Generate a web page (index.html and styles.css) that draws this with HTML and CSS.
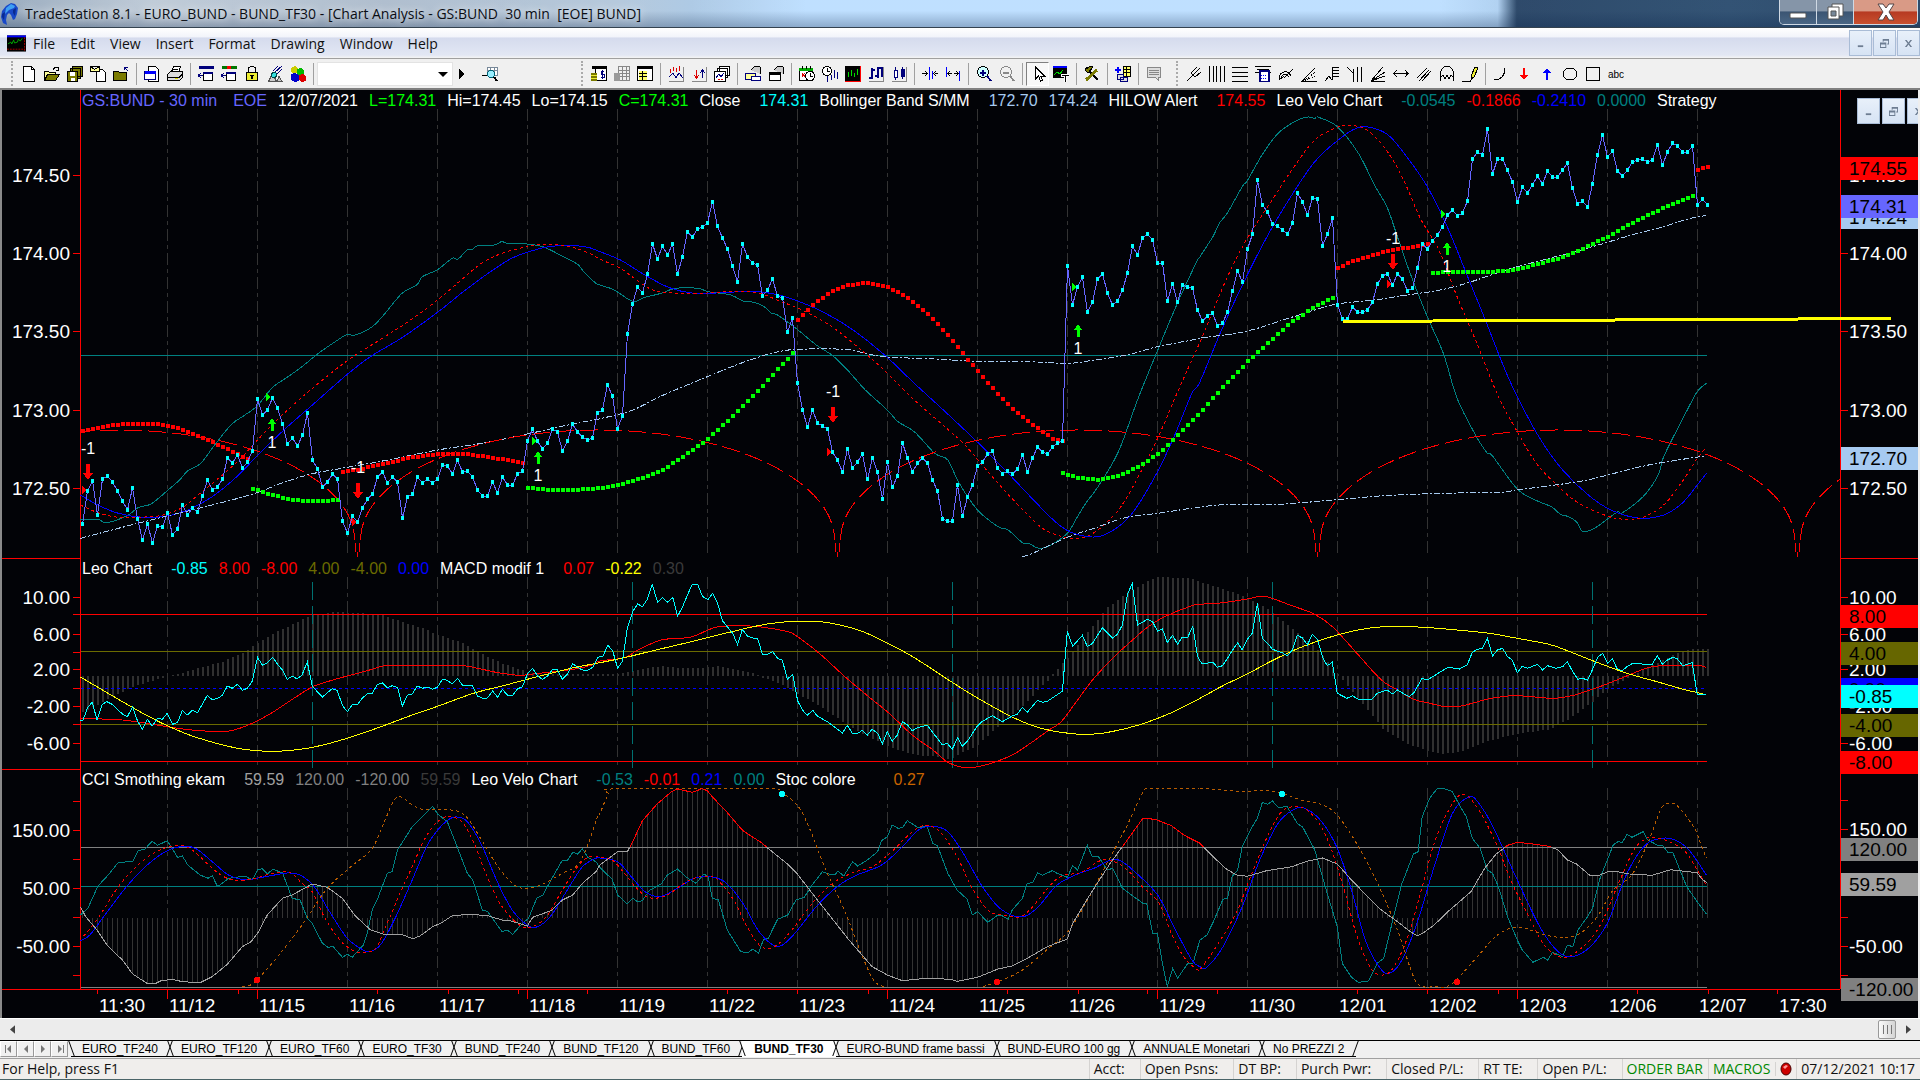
FILE: index.html
```html
<!DOCTYPE html>
<html lang="en">
<head>
  <meta charset="UTF-8" />
  <meta name="viewport" content="width=device-width, initial-scale=1.0"/>
  <title>TradeStation 8.1 - EURO_BUND</title>
  <link rel="stylesheet" href="styles.css">
</head>
<body>
  <header class="titlebar">
    <svg class="logo" viewBox="0 0 18 24"><path d="M2 9 6 4l5-3 4 1 3 4-1 6-2 5-2 1-2-5-2-2-2 2-1 5 1 5-4-2-2-6z" fill="#1848c8"/><path d="M6 6l5-4 4 2-1 2-5 2-4 4z" fill="#3ea0f4"/><path d="M2 12l3-2-1 8-2-3zM13 8l3-2-1 8-2-3z" fill="#0a2a90"/></svg>
    <h1>TradeStation 8.1 - EURO_BUND - BUND_TF30 - [Chart Analysis - GS:BUND&nbsp; 30 min&nbsp; [EOE] BUND]</h1>
    <div class="window-buttons">
      <button aria-label="Minimize"><svg viewBox="0 0 18 18"><rect x="1" y="10" width="16" height="5" rx="1" fill="#fff" stroke="#555"/></svg></button>
      <button aria-label="Restore"><svg viewBox="0 0 18 18"><path d="M6 1h11v12H6z" fill="#fff" stroke="#555"/><path d="M2 4h11v12H2z" fill="#fff" stroke="#555"/><path d="M5 8h5v5H5z" fill="#789" stroke="#555"/></svg></button>
      <button class="close" aria-label="Close"><svg viewBox="0 0 18 18"><path d="M1 1h5l3 4 3-4h5l-5 8 5 8h-5l-3-5-3 5H1l5-8z" fill="#fff" stroke="#544"/></svg></button>
    </div>
  </header>

  <nav class="menubar">
    <svg class="doc-icon" viewBox="0 0 20 17"><path d="M0 0h20v17H0z" fill="#000"/><path d="M0 0h20v2H0z" fill="#00f"/><path d="M1 9l3-2 1 2 2-4 1 3 3-1 1-3 2 2 2-3" fill="none" stroke="#0a0"/><path d="M0 14.500h19M18.500 2v14" stroke="#a00" stroke-dasharray="2 1"/></svg>
    <a href="#">File</a>
    <a href="#">Edit</a>
    <a href="#">View</a>
    <a href="#">Insert</a>
    <a href="#">Format</a>
    <a href="#">Drawing</a>
    <a href="#">Window</a>
    <a href="#">Help</a>
    <div class="mdi-buttons">
      <button aria-label="Minimize chart"><svg viewBox="0 0 10 10"><path d="M2 7h6v2H2z"/></svg></button>
      <button aria-label="Restore chart"><svg viewBox="0 0 10 10"><path d="M3 0h7v6H8V5h1V2H4v1H3zM0 4h7v6H0zm1 2v3h5V6z"/></svg></button>
      <button aria-label="Close chart"><svg viewBox="0 0 10 10"><path d="M1 1h2l2 3 2-3h2L6 5l3 4H7L5 6 3 9H1l3-4z"/></svg></button>
    </div>
  </nav>

  <div class="toolbar">
    <div class="tools" id="toolsMain"></div>
    <div class="tools" id="toolsChart"></div>
    <div class="tools" id="toolsDraw"></div>
  </div>

  <main class="chart">
    <section class="pane pane-price">
      <div class="axis axis-left" id="axisL1"></div>
      <div class="plot">
        <svg id="plot1" viewBox="81 90 1759 468" preserveAspectRatio="none"></svg>
        <div class="legend">
          <span class="violet">GS:BUND - 30 min</span><span class="violet session">EOE</span><span>12/07/2021</span><span class="lime">L=174.31</span><span>Hi=174.45</span><span>Lo=174.15</span><span class="lime">C=174.31</span>
          <span>Close</span><span class="cyan value">174.31</span>
          <span>Bollinger Band S/MM</span><span class="sky value">172.70</span><span class="sky">174.24</span>
          <span>HILOW Alert</span><span class="red value">174.55</span>
          <span>Leo Velo Chart</span><span class="teal value">-0.0545</span><span class="red">-0.1866</span><span class="blue">-0.2410</span><span class="teal">0.0000</span>
          <span>Strategy</span>
        </div>
      </div>
      <div class="axis axis-right" id="axisR1"></div>
      <div class="mdi-buttons floating">
        <button aria-label="Minimize window"><svg viewBox="0 0 10 10"><path d="M2 7h6v2H2z"/></svg></button>
        <button aria-label="Restore window"><svg viewBox="0 0 10 10"><path d="M3 0h7v6H8V5h1V2H4v1H3zM0 4h7v6H0zm1 2v3h5V6z"/></svg></button>
        <button aria-label="Close window"><svg viewBox="0 0 10 10"><path d="M1 1h2l2 3 2-3h2L6 5l3 4H7L5 6 3 9H1l3-4z"/></svg></button>
      </div>
    </section>

    <section class="pane pane-leo">
      <div class="axis axis-left" id="axisL2"></div>
      <div class="plot">
        <svg id="plot2" viewBox="81 558 1759 211" preserveAspectRatio="none"></svg>
        <div class="legend">
          <span>Leo Chart</span><span class="cyan value">-0.85</span><span class="red">8.00</span><span class="red">-8.00</span><span class="olive">4.00</span><span class="olive">-4.00</span><span class="blue">0.00</span>
          <span>MACD modif 1</span><span class="red value">0.07</span><span class="yellow">-0.22</span><span class="dim">0.30</span>
        </div>
      </div>
      <div class="axis axis-right" id="axisR2"></div>
    </section>

    <section class="pane pane-cci">
      <div class="axis axis-left" id="axisL3"></div>
      <div class="plot">
        <svg id="plot3" viewBox="81 769 1759 220" preserveAspectRatio="none"></svg>
        <div class="legend">
          <span>CCI Smothing ekam</span><span class="silver value">59.59</span><span class="gray">120.00</span><span class="gray">-120.00</span><span class="dim">59.59</span>
          <span>Leo Velo Chart</span><span class="teal value">-0.53</span><span class="red">-0.01</span><span class="blue">0.21</span><span class="teal">0.00</span>
          <span>Stoc colore</span><span class="orange value wide">0.27</span>
        </div>
      </div>
      <div class="axis axis-right" id="axisR3"></div>
    </section>

    <div class="time-axis" id="timeAxis"></div>
  </main>

  <div class="scrollbar">
    <button aria-label="Scroll left"><svg viewBox="0 0 6 10"><path d="M6 0v10L0 5z"/></svg></button>
    <div class="track"><div class="thumb"></div></div>
    <button aria-label="Scroll right"><svg viewBox="0 0 6 10"><path d="M0 0v10l6-5z"/></svg></button>
  </div>

  <nav class="tabs">
    <div class="tab-nav">
      <button aria-label="First"><svg viewBox="0 0 8 8"><path d="M0 0h1v8H0zM6 0v8L2 4z"/></svg></button>
      <button aria-label="Previous"><svg viewBox="0 0 8 8"><path d="M6 0v8L2 4z"/></svg></button>
      <button aria-label="Next"><svg viewBox="0 0 8 8"><path d="M2 0v8l4-4z"/></svg></button>
      <button aria-label="Last"><svg viewBox="0 0 8 8"><path d="M2 0v8l4-4zM7 0h1v8H7z"/></svg></button>
    </div>
    <a href="#">EURO_TF240</a>
    <a href="#">EURO_TF120</a>
    <a href="#">EURO_TF60</a>
    <a href="#">EURO_TF30</a>
    <a href="#">BUND_TF240</a>
    <a href="#">BUND_TF120</a>
    <a href="#">BUND_TF60</a>
    <a href="#" class="active">BUND_TF30</a>
    <a href="#">EURO-BUND frame bassi</a>
    <a href="#">BUND-EURO 100 gg</a>
    <a href="#">ANNUALE Monetari</a>
    <a href="#">No PREZZI 2</a>
  </nav>

  <footer class="status">
    <span class="help">For Help, press F1</span>
    <span>Acct:</span>
    <span>Open Psns:</span>
    <span>DT BP:</span>
    <span>Purch Pwr:</span>
    <span>Closed P/L:</span>
    <span>RT TE:</span>
    <span>Open P/L:</span>
    <span class="on">ORDER BAR</span>
    <span class="on">MACROS</span>
    <span class="led"><svg viewBox="0 0 12 14"><ellipse cx="6" cy="7" rx="5" ry="6" fill="#c00" stroke="#400"/><path d="M3 5l3-2 2 1-3 3z" fill="#f99"/></svg></span>
    <span>07/12/2021 10:17</span>
  </footer>

  <script src="script.js"></script>
</body>
</html>
```
FILE: styles.css
```css
:root {
  --ui: "Open Sans", "Noto Sans", sans-serif;
  --sans: "Liberation Sans", Arial, sans-serif;
  --axis: #f00;
  --black: #020307;
}

* {
  box-sizing: border-box;
}

body {
  margin: 0;
  height: 100vh;
  display: flex;
  flex-direction: column;
  overflow: hidden;
  background: #f0eeed;
  font-family: var(--sans);
}

button {
  margin: 0;
  padding: 0;
  border: none;
  background: none;
}

a {
  color: inherit;
  text-decoration: none;
}

svg {
  display: block;
}

/* title bar */
.titlebar {
  height: 28px;
  display: flex;
  align-items: center;
  padding-right: 2px;
  border-bottom: 1px solid #34424f;
  background:
    linear-gradient(to bottom, rgba(255, 255, 255, 0.1) 40%, rgba(60, 80, 110, 0.35)),
    linear-gradient(to right, #8fa3b8, #b9c6d4 8%, #a7b7c9 20%, #aec3d8 32%, #a5c4e2 36%, #b8dcff 42%, #b8dcff 75%, #a9cdf0 78%, #17365a 79%, #1c4065 90%, #17375a);
}

.logo {
  width: 18px;
  height: 24px;
}

.titlebar h1 {
  flex: 1;
  margin: 0 0 0 7px;
  font: 14px/28px var(--ui);
  color: #0a0d14;
  white-space: nowrap;
  text-shadow: 0 0 8px #fff;
}

.window-buttons {
  display: flex;
  align-self: flex-start;
  height: 25px;
  border: 1px solid #cfd9e4;
  border-top: none;
  border-radius: 0 0 5px 5px;
  overflow: hidden;
}

.window-buttons button {
  width: 37px;
  display: flex;
  align-items: center;
  justify-content: center;
  border-right: 1px solid #cfd9e4;
  background: linear-gradient(#8595a8 45%, #3b5573 50%, #4a6685);
}

.window-buttons .close {
  width: 63px;
  border-right: none;
  background: linear-gradient(#d99a86 45%, #b73a22 50%, #c9502f);
}

.window-buttons svg {
  width: 18px;
  height: 18px;
}

/* menu */
.menubar {
  height: 31px;
  display: flex;
  align-items: center;
  gap: 15px;
  padding-left: 7px;
  background: linear-gradient(#fff, #f2f4fa 30%, #d5dbed 33%, #e2e7f4 90%, #f4f4f4);
  border-bottom: 1px solid #a0a0a0;
  font: 14px/31px var(--ui);
  color: #111;
}

.doc-icon {
  width: 19px;
  height: 17px;
  margin-right: -8px;
}

.mdi-buttons {
  display: flex;
  gap: 1px;
}

.menubar .mdi-buttons {
  margin-left: auto;
}

.mdi-buttons button {
  width: 23px;
  height: 26px;
  display: flex;
  align-items: center;
  justify-content: center;
  border: 1px solid #a9bcd6;
  background: linear-gradient(#e8f0fa, #d6e3f4);
}

.mdi-buttons svg {
  width: 9px;
  height: 9px;
  fill: #6d7d92;
}

.floating {
  position: absolute;
  top: 8px;
  left: calc(100% - 61px);
  gap: 2px;
}

/* toolbar */
.toolbar {
  height: 31px;
  display: grid;
  grid-template-columns: 30% 31% 1fr;
  background: #f0f0f0;
  border-bottom: 2px solid #808080;
}

.tools {
  display: flex;
  align-items: center;
}

.tools::before {
  content: "";
  height: 25px;
  margin: 0 4px 0 5px;
  border-left: 2px dotted #aaa;
}

.tools:first-child::before {
  margin-left: 11px;
}

.tools button {
  width: 23px;
  height: 24px;
  display: flex;
  align-items: center;
  justify-content: center;
  flex: none;
}

.tools button.pressed {
  border: 1px solid #fff;
  border-color: #808080 #fff #fff #808080;
  background: #f8f8f8;
}

.tools svg {
  width: 16px;
  height: 16px;
  shape-rendering: crispEdges;
}

.tools .sep {
  height: 22px;
  margin: 0 3px 0 4px;
  border-left: 1px solid #a0a0a0;
}

.tools select {
  width: 136px;
  height: 24px;
  border: 1px solid #e3e3e3;
  background: #fff;
  appearance: none;
}

.combo {
  position: relative;
}

.combo::after {
  content: "";
  position: absolute;
  right: 5px;
  top: 10px;
  border: 5px solid transparent;
  border-top-color: #000;
  border-bottom: none;
}

.tools .go {
  width: 16px;
  margin-right: 9px;
}

/* chart */
.chart {
  flex: 1;
  min-height: 0;
  display: grid;
  grid-template-rows: 468fr 211fr 220fr 29px;
  background: var(--black);
  border-left: 2px solid #8a8a8a;
  border-right: 2px solid #eee;
  overflow: hidden;
}

.pane {
  position: relative;
  display: grid;
  grid-template-columns: 79px 1fr 78px;
  min-height: 0;
}

.plot {
  position: relative;
  z-index: 1;
  min-height: 0;
}

.plot svg {
  width: 100%;
  height: 100%;
  overflow: visible;
  shape-rendering: crispEdges;
}

.plot text {
  fill: #fff;
  font: 16px var(--sans);
  text-anchor: middle;
}

.axis {
  position: relative;
  color: #fff;
  font-size: 19px;
  line-height: 23px;
}

.axis-left {
  border-right: 1px solid var(--axis);
}

.axis-right {
  border-left: 1px solid var(--axis);
}

.pane-leo .axis,
.pane-cci .axis-left {
  border-top: 1px solid var(--axis);
}

.mark {
  position: absolute;
  left: 0;
  right: 0;
  height: 23px;
  margin-top: -11px;
}

.axis-left .mark {
  padding-right: 10px;
  text-align: right;
}

.axis-right .mark {
  padding-left: 8px;
}

.mark::after {
  content: "";
  position: absolute;
  top: 11px;
  width: 7px;
  border-top: 1px solid var(--axis);
}

.axis-left .mark::after {
  right: 0;
}

.axis-right .mark::after {
  left: 0;
}

.mark.tag {
  color: #000;
}

.mark.tag::after {
  display: none;
}

.legend {
  position: absolute;
  top: 1px;
  left: 1px;
  display: flex;
  gap: 11px;
  font-size: 16px;
  line-height: 20px;
  color: #fff;
  white-space: nowrap;
}

.legend .value {
  margin-left: 8px;
}

.legend .session {
  margin-left: 5px;
}

.legend .wide {
  margin-left: 27px;
}

.violet { color: #66f; }
.lime { color: #0f0; }
.cyan { color: #0ff; }
.sky { color: #a6caf0; }
.red { color: #f00; }
.teal { color: #008080; }
.blue { color: #00f; }
.olive { color: #6b6b00; }
.yellow { color: #ff0; }
.dim { color: #3a3a3a; }
.silver { color: #a0a0a0; }
.gray { color: #808080; }
.orange { color: #c86400; }

.bg-red { background: #f00; }
.bg-violet { background: #66f; }
.bg-sky { background: #a6caf0; }
.bg-olive { background: #666600; }
.bg-blue { background: #00f; }
.bg-cyan { background: #0ff; }
.bg-gray { background: #808080; }
.bg-silver { background: #a0a0a0; }

.time-axis {
  position: relative;
  color: #fff;
  font-size: 19px;
  line-height: 24px;
}

.time-axis::before {
  content: "";
  position: absolute;
  left: 0;
  right: 78px;
  border-top: 1px solid var(--axis);
}

.time-axis span {
  position: absolute;
  top: 5px;
}

.time-axis i {
  position: absolute;
  top: 0;
  height: 5px;
  border-left: 1px solid var(--axis);
}

.time-axis .long {
  height: 10px;
}

/* scrollbar */
.scrollbar {
  height: 22px;
  display: flex;
  align-items: center;
  background: #ececec;
  border-top: 1px solid #fff;
}

.scrollbar button {
  width: 24px;
  display: flex;
  justify-content: center;
}

.scrollbar svg {
  width: 5px;
  height: 9px;
  fill: #444;
}

.track {
  flex: 1;
  display: flex;
  justify-content: flex-end;
}

.thumb {
  width: 18px;
  height: 19px;
  border: 1px solid #999;
  border-radius: 2px;
  background:
    repeating-linear-gradient(to right, #777 0 1px, transparent 1px 4px) center / 9px 9px no-repeat,
    linear-gradient(to right, #fafafa, #d5d5d5);
}

/* workspace tabs */
.tabs {
  height: 19px;
  display: flex;
  border-top: 1px solid #000;
  background: #f0f0f0;
  border-bottom: 1px solid #a0a0a0;
  font-size: 12px;
  line-height: 17px;
  color: #000;
}

.tab-nav {
  display: flex;
  margin-right: 3px;
}

.tab-nav button {
  width: 17px;
  height: 16px;
  display: flex;
  align-items: center;
  justify-content: center;
  border: 1px solid #fff;
  border-color: #fff #999 #999 #fff;
}

.tab-nav svg {
  width: 8px;
  height: 8px;
  fill: #777;
}

.tabs a {
  position: relative;
  height: 16px;
  padding: 0 12px 0 11px;
  border-bottom: 1px solid #000;
}

.tabs a::after {
  content: "";
  position: absolute;
  right: 0;
  top: 0;
  height: 15px;
  border-right: 1px solid #000;
  transform: skewX(-20deg);
}

.tabs a::before {
  content: "";
  position: absolute;
  left: 0;
  top: 0;
  height: 15px;
  border-right: 1px solid #000;
  transform: skewX(20deg);
}

.tabs .active {
  padding: 0 12px;
  background: #fff;
  border-bottom-color: #fff;
  font-weight: bold;
}

/* status bar */
.status {
  height: 21px;
  display: flex;
  align-items: center;
  border-bottom: 1px solid #4a6468;
  background: #f0eeec;
  font: 14px/20px var(--ui);
  color: #111;
  white-space: nowrap;
}

.status span {
  padding: 0 15px 0 4px;
  border-left: 1px solid #d5d3d1;
}

.status .help {
  flex: 1;
  padding-left: 2px;
  border: none;
}

.status .on {
  padding-right: 5px;
  color: #080;
}

.status .led {
  padding: 0 4px;
}

.status span:last-child {
  padding-right: 5px;
}

.led svg {
  width: 12px;
  height: 14px;
}
```
FILE: script.js
```js
// ---------- toolbar ----------
const K = 'fill="none" stroke="#000"';
const N = 'fill="none" stroke="#00007b"';
const G = 'fill="none" stroke="#888"';

const icons = {
  blank: `<path d="M2.500 .5h8l3 3v12h-11z" fill="#fff" stroke="#000"/><path d="M10.500 .5v3h3" ${K}/>`,
  open: `<path d="M.5 14V5.500h4l1 1h6v2" fill="#ff9" stroke="#000"/><path d="M.5 14.500l3-6h12l-4 6z" fill="#7b7b00" stroke="#000"/><path d="M9 3.500l2-2h3v3m-2 0h3" ${K}/>`,
  saveAll: `<path d="M5.500 .5h10v10h-10zM3.500 2.500h10v10h-10z" fill="#7b7b00" stroke="#000"/><path d="M.5 5.500h10v10h-10z" fill="#7b7b00" stroke="#000"/><path d="M3 6h5v4H3zM4 12h4v3H4z" fill="#fff"/>`,
  mailDoc: `<path d="M6.500 3.500h6l3 3v9h-9z" fill="#fff" stroke="#000"/><path d="M.5 .5h9v5h-9zl4 3 5-3" fill="#ff9" stroke="#000"/>`,
  folderUp: `<path d="M.5 14.500v-9h5l1 1h7v8z" fill="#7b7b00" stroke="#000"/><path d="M15 5l-3-3M11.500 4V1.500H15" ${N}/>`,
  winDoc: `<path d="M4.500 .5h7l3 3v12h-10z" fill="#fff" stroke="#000"/><path d="M.5 5.500h11v8H.5z" fill="#fff" stroke="#00007b"/><path d="M1 5h11v3H1z" fill="#00f"/>`,
  print: `<path d="M4.500 6l2-5.500h7l-2 6" fill="#fff" stroke="#000"/><path d="M.5 8.500l3-3h12v6l-3 3H.5z" fill="#ddd" stroke="#000"/><path d="M1 11.500h11l3-3M6 3.500h5" ${K}/><path d="M8 12h3v1H8z" fill="#dd0"/>`,
  winBack: `<path d="M1 0h15v3H1z" fill="#00007b"/><path d="M5.500 6.500h9v8h-9z" fill="#fff" stroke="#000"/><path d="M5 6h10v2H5z" fill="#00007b"/><path d="M0 9.500h5M3 7l-3 2.500L3 12" ${N}/>`,
  winNext: `<path d="M1 0h15v3H1z" fill="#070"/><path d="M6 0h4v3H6z" fill="#f00"/><path d="M5.500 6.500h9v8h-9z" fill="#fff" stroke="#000"/><path d="M5 6h10v2H5z" fill="#00007b"/><path d="M0 9.500h5M3 7l-3 2.500L3 12" ${N}/>`,
  lock: `<path d="M4.500 7V2l2-1.500h3l2 1.500v5" ${K}/><path d="M2.500 6.500h11v8h-11z" fill="#ee3" stroke="#000"/><path d="M6 9h4v1H9v3H7v-3H6z"/>`,
  satellite: `<path d="M15 0L7 7m8-4L9 9m2-9L6 5" ${N}/><path d="M1.500 15.500l4-8 4 8zM10 15.500h5l-3-5z" fill="#ccc" stroke="#555"/><circle cx="7" cy="9" r="2.500" fill="#3dd" stroke="#044"/>`,
  cubes: `<path d="M1 2l4-2 3 2v5l-4 1-3-2z" fill="#cc0"/><path d="M7 3l4-1 3 2v5l-4 1-3-2z" fill="#0b0"/><path d="M1 8l4-1 4 2v6l-4 1-4-2z" fill="#00c"/><path d="M9 9l4-1 3 2v5l-4 1-3-2z" fill="#d00"/>`,
  go: `<path d="M6 3v10l5-5z"/>`,
  lookup: `<path d="M5 1.500h10v8H5zM5 4.500h10M8.500 1v8M12 1v8" fill="#fff" stroke="#789"/><path d="M0 9.500h7" ${K}/><circle cx="9" cy="8" r="3.500" fill="#9ef" stroke="#067"/><path d="M12 11l3 4" stroke="#000" stroke-width="2"/>`,
  moneyTable: `<path d="M4.500 .5h11v14h-11z" fill="#fff" stroke="#000"/><path d="M1 0h14v3H1z"/><path d="M0 7h6v8H0z" fill="#7b7b00"/><path d="M0 9.500h6M0 12.500h6" stroke="#ee3"/><path d="M13 5.500h-3v3h3v3h-3M11.500 4v9" ${N}/>`,
  tableOff: `<path d="M4.500 .5h11v14h-11zM5 4.500h10M5 7.500h10M5 10.500h10M8.500 1v13M12.500 1v13" ${G}/><path d="M0 7h6v8H0z" fill="#999"/>`,
  table: `<path d="M.5 .5h15v14H.5z" fill="#fff" stroke="#000"/><path d="M0 0h16v3H0z"/><path d="M2 5h8v9H2z" fill="#ff6"/><path d="M2 7.500h8M2 10.500h8M5.500 5v9" ${K}/>`,
  wave: `<path d="M.5 15.500h15V1" ${G}/><path d="M1 11l4-4 3 5 3-5 4 5" fill="none" stroke="#00007b"/><path d="M2.500 3v4M5.500 1v4M8.500 2v4M11.500 0v5" stroke="#d00"/>`,
  upDown: `<path d="M.5 15.500h15V1" ${G}/><path d="M5.500 4v8M3 9l2.500 3L8 9" fill="none" stroke="#d00"/><path d="M11.500 12V4M9 7l2.500-3L14 7" ${N}/>`,
  windows: `<path d="M5.500 .5h10v9h-10zM3.500 2.500h10v9h-10z" fill="#fff" stroke="#000"/><path d="M.5 5.500h11v10H.5z" fill="#fff" stroke="#000"/><path d="M2 12l3-4 2 3 3-4" ${N}/><path d="M4 13h2M7 13h2" stroke="#d00"/>`,
  sheet: `<path d="M6 4l4-4 5 1v7" fill="#ccc" stroke="#000"/><path d="M.5 7.500h10v6H.5z" fill="#ff9" stroke="#00007b"/><path d="M6 10.500h9v4H6z" fill="#fff" stroke="#00007b"/>`,
  sheetDark: `<path d="M6 4l4-4 5 1v7" fill="#ccc" stroke="#000"/><path d="M1.500 6.500h11v8h-11z" fill="#fff" stroke="#000"/><path d="M1 6h12v3H1z"/>`,
  calClock: `<path d="M.5 2.500h13v12H.5z" fill="#fff" stroke="#000"/><path d="M0 2h14v3H0z" fill="#0a0"/><path d="M3.500 0v3M7.500 0v3M11.500 0v3" ${K}/><path d="M3 7l3 4m0-4l-3 4" stroke="#d00"/><circle cx="11" cy="10" r="4.500" fill="#fff" stroke="#000"/><path d="M11 7v3h3" ${K}/>`,
  clockBars: `<circle cx="5" cy="5" r="4.500" fill="#fff" stroke="#000"/><path d="M5 2v3h3" ${K}/><path d="M5.500 10v6M9.500 9v5M12.500 4v8M15.500 6v7" ${N}/>`,
  barChart: `<path d="M0 0h16v16H0z"/><path d="M3.500 6v5M6.500 4v6M9.500 7v4M12.500 3v6" stroke="#0d0"/><path d="M15.500 0v16M0 15.500h16" stroke="#f00"/>`,
  bars: `<path d="M.5 15.500h15V1" ${G}/><path d="M4 2v11M4 12H1M4 4h3M10 1v11M10 10H7M10 2h4v9" fill="none" stroke="#00007b" stroke-width="2"/>`,
  candles: `<path d="M.5 15.500h15V1" ${G}/><path d="M4.500 1v13M11.500 1v12" ${N}/><path d="M3 4h3v7H3z" fill="#fff" stroke="#00007b"/><path d="M10 3h4v8h-4z" fill="#00007b"/>`,
  squeeze: `<path d="M7.500 1v13M10.500 5v8" stroke="#00f"/><path d="M0 7.500h5M3 5l2.500 2.500L3 10M16 7.500h-3M14 5l-2.500 2.500L14 10" ${K}/>`,
  expand: `<path d="M1.500 1v10M14.500 5v10" stroke="#00f"/><path d="M3 7.500h4M5 5L3 7.500 5 10M13 7.500H9M11 5l2 2.500L11 10" ${K}/>`,
  zoomIn: `<circle cx="7" cy="6" r="5.500" fill="#cff" stroke="#000"/><path d="M4 6.500h6M7 3.500v6" stroke="#00007b" stroke-width="2"/><path d="M11 10l4 5" stroke="#00007b" stroke-width="2"/>`,
  zoomOut: `<circle cx="7" cy="6" r="5.500" ${G}/><path d="M4 6.500h6" stroke="#888" stroke-width="2"/><path d="M11 10l4 5" stroke="#888" stroke-width="2"/>`,
  pointer: `<path d="M5.500 1v12l3-3 2 5 2-1-2-4h4z" fill="#fff" stroke="#000"/>`,
  textChart: `<path d="M0 1h14v11H0z"/><path d="M0 0h14v2H0z" fill="#00f"/><path d="M1 9l3-3 3 2 3-4" fill="none" stroke="#0d0"/><path d="M8 8h8v2h-3v6h-2v-6H8z" stroke="#fff"/>`,
  tools: `<path d="M2 2l12 12" stroke="#000" stroke-width="2"/><path d="M13 4L2 14" stroke="#7b7b00" stroke-width="3"/><path d="M1 4l5-4 3 1-5 6z" fill="#7b7b00" stroke="#000"/>`,
  addSheet: `<path d="M8.500 .5h7v10h-7z" fill="#ff6" stroke="#000"/><path d="M9 3.500h6M9 6.500h6M11.500 1v9" ${K}/><path d="M0 3.500h6M3 .5v6" stroke="#00f" stroke-width="2"/><path d="M2.500 8.500h6v5h-6zM5.500 11.500h7v4h-7z" fill="#ddd" stroke="#00007b"/>`,
  note: `<path d="M1.500 1.500h13v10h-2v3l-3-3h-8z" fill="#ddd" stroke="#888"/><path d="M3 4.500h10M3 6.500h10M3 8.500h10" ${G}/>`,
  fork: `<path d="M1 15l6-6M5 7l4 4M5 7l6-6M9 11l6-5M7 9l7-7" ${K}/>`,
  vlines: `<path d="M.5 0v16M4.500 0v16M7.500 0v16M11.500 0v16M15.500 0v16" ${K}/>`,
  hlines: `<path d="M0 1.500h16M0 6.500h16M0 10.500h16M0 15.500h16" ${K}/>`,
  calc: `<path d="M0 .5h16M2 3.500h12M0 6.500h16" ${K}/><path d="M4.500 4.500h9v11h-9z" fill="#fff" stroke="#00007b" stroke-width="2"/><path d="M6 9.500h6M6 12.500h6" stroke="#00f" stroke-dasharray="1 1"/>`,
  arcs: `<path d="M1 13c1-9 9-9 12-3M3 13c1-6 6-6 8-2M1 14l5-4M6 12l9-9" ${K}/>`,
  fan: `<path d="M0 15.500h16M1 15L14 2" ${K}/><path d="M2 15L15 6M2 15l13-5" fill="none" stroke="#000" stroke-dasharray="1 1"/>`,
  ladder: `<path d="M1 15l4-5 3 4 1-13M9 1.500h6M9 4.500h6M9 7.500h6M9 10.500h6" ${K}/>`,
  timeLines: `<path d="M0 1l6 6M6.500 3v13M10.500 1v15M14.500 1v15" ${K}/>`,
  fanLines: `<path d="M1 15.500h14M1 15L13 1M1 15l14-9M1 15l14-5" ${K}/>`,
  extend: `<path d="M1 7.500h14M4 4L1 7.500 4 11M12 4l3 3.500-3 3.500" ${K}/>`,
  parallel: `<path d="M1 12L11 2M3 15L13 4M6 15l9-10" ${K}/>`,
  cycle: `<path d="M1.500 15V7c1-9 12-9 13 0v8M1 12l3-3 2 4 2-4 2 4 2-4 3 3" ${K}/>`,
  pencil: `<path d="M0 15.500h8l2-3" ${K}/><path d="M9 10l4-9 3 1-4 9-3 2z" fill="#ee3" stroke="#000"/>`,
  arc: `<path d="M1 14c7 0 11-5 11-12" ${K}/>`,
  down: `<path d="M7 2h2v7h3l-4 5-4-5h3z" fill="#f00"/>`,
  up: `<path d="M7 14h2V7h3L8 2 4 7h3z" fill="#00f"/>`,
  ellipse: `<ellipse cx="8" cy="8" rx="7" ry="6" ${K}/>`,
  rect: `<path d="M1.500 1.500h13v13h-13z" ${K}/>`,
  abc: `<text x="0" y="12" font-size="10" font-family="Liberation Sans">abc</text>`
};

const toolbars = {
  toolsMain: 'blank open saveAll mailDoc folderUp | winDoc print | winBack winNext lock satellite cubes | combo go lookup',
  toolsChart: 'moneyTable tableOff table | wave upDown windows | sheet sheetDark | calClock clockBars barChart bars candles | squeeze expand | zoomIn zoomOut | pointer textChart | tools | addSheet | note',
  toolsDraw: 'fork vlines hlines calc arcs fan ladder timeLines fanLines extend parallel cycle pencil | arc down up ellipse rect abc'
};

for (const id in toolbars) {
  document.getElementById(id).innerHTML = toolbars[id].split(' ').map(name => {
    if (name === '|') return '<span class="sep"></span>';
    if (name === 'combo') return '<span class="combo"><select aria-label="Symbol"></select></span>';
    const cls = name === 'pointer' ? 'pressed' : name === 'go' ? 'go' : '';
    return `<button class="${cls}" aria-label="${name}"><svg viewBox="0 0 16 16">${icons[name]}</svg></button>`;
  }).join('');
}

// ---------- series data ----------
// One close per 30 min bar, counted down from the top of the pane, 3 units per pixel
const close = [
  1242,1143,1113,1215,1107,1098,1116,1143,1173,1199,1134,1227,1290,1242,1299,1247,1251,
  1209,1275,1257,1185,1215,1194,1206,1158,1110,1140,1131,1107,1044,1059,1035,1074,1056,1022,
  867,915,900,864,894,942,1002,984,1008,975,909,1050,1077,1131,1116,1092,1107,1233,
  1269,1218,1236,1194,1167,1152,1101,1086,1119,1101,1116,1224,1161,1152,1101,1119,1107,1119,
  1107,1065,1068,1092,1050,1086,1083,1101,1140,1158,1158,1116,1149,1101,1125,1125,1092,1083,
  993,957,993,1017,999,957,966,1023,993,942,966,981,990,984,909,900,825,858,
  957,917,671,581,531,549,492,402,447,408,435,402,492,441,366,381,357,351,
  339,275,348,384,417,468,516,402,441,459,465,558,540,507,558,564,666,624,
  819,900,951,900,939,948,957,1026,1050,1086,1017,1074,1056,1032,1107,1044,1086,1167,
  1056,1131,1098,999,1044,1086,1059,1044,1059,1110,1143,1227,1233,1233,1125,1218,1161,1125,
  1068,1056,1032,1023,1074,1092,1083,1092,1077,1035,1086,1044,1011,1026,1032,1011,999,993,
  468,585,531,501,606,576,507,492,549,585,573,540,489,408,435,384,372,390,
  459,459,573,522,576,525,531,534,600,633,618,609,648,639,606,543,483,516,
  417,372,210,285,306,342,348,360,372,339,249,276,315,264,267,408,372,324,
  585,627,627,591,606,606,600,576,522,497,492,525,492,507,543,534,474,402,
  417,393,375,351,315,300,318,309,273,147,126,134,57,192,147,147,180,216,
  276,231,249,225,198,222,183,201,201,180,159,234,282,273,291,222,134,75,
  141,123,183,198,180,156,150,147,156,150,104,165,126,99,108,126,126,108,
  285,267,285
];

// Curves are kept in three chunks, split by "|", each with its own origin and x scale
const chunks = [{ x: 0, k: 2.45 }, { x: 600, k: 2.45 }, { x: 1200, k: 2.178 }];

const price = {
  velo: '197,1228 240,1228 260,1238 310,1218 340,1192 370,1182 410,1142 440,1110 460,1082 490,1062 520,1015 545,975 570,940 600,915 630,888 668,832 700,805 740,770 780,730 830,688 851,673 870,675 910,652 940,615 985,550 1022,524 1035,500 1072,479 1108,445 1122,447 1145,420 1158,417 1170,407 1210,405 1230,394 1240,399 1290,402 1330,410 1380,440 1415,463 1430,485 1460,520|0,525 35,540 80,574 110,562 150,550 185,535 240,535 265,545 320,555 350,573 370,575 400,588 420,610 435,615 480,655 530,705 570,737 610,785 650,840 704,900 730,935 770,965 820,1030 852,1050 880,1120 925,1200 975,1250 1000,1260 1035,1298 1050,1300 1075,1315 1100,1308 1145,1270 1165,1230 1190,1180 1220,1130 1270,1025 1320,860 1380,680 1420,565 1460,460|0,440 28,380 42,340 60,308 92,230 103,212 135,135 170,70 210,32 235,21 250,25 258,22 299,50 345,130 380,225 407,290 430,380 455,480 495,620 530,730 560,865 600,975 625,1028 637,1038 691,1137 730,1170 765,1190 785,1213 800,1219 820,1235 834,1265 855,1258 870,1245 908,1207 920,1208 965,1160 998,1095 1010,1040 1050,930 1083,845 1103,820',
  fast: '197,1185 240,1208 290,1222 340,1222 400,1215 450,1190 490,1150 540,1100 590,1045 650,965 700,905 770,830 851,752 930,690 1000,635 1072,570 1130,510 1180,460 1230,430 1292,410 1340,403 1390,408 1440,428|5,450 50,475 90,510 130,540 190,550 263,549 330,544 390,550 440,573 500,603 570,652 640,720 700,785 770,870 840,945 890,1000 940,1070 990,1140 1045,1210 1090,1260 1145,1283 1180,1284 1220,1260 1270,1200 1310,1120 1366,985 1410,860 1450,750|5,680 60,500 103,385 150,285 200,180 250,90 299,52 320,46 360,57 400,110 440,200 480,325 520,420 560,560 600,690 650,860 691,965 730,1055 770,1115 820,1175 887,1218 930,1228 965,1222 1010,1185 1050,1115 1083,1045 1103,1013',
  slow: '197,1155 240,1185 290,1210 350,1222 410,1218 460,1200 520,1160 580,1100 640,1025 700,955 770,880 851,793 910,738 985,683 1072,607 1130,550 1190,495 1250,447 1292,427 1340,411 1390,406 1440,412|0,425 50,450 110,495 170,533 230,550 300,548 370,544 430,553 484,573 550,608 620,660 700,738 770,820 850,910 925,997 1000,1090 1070,1180 1120,1240 1160,1270 1220,1280 1270,1250 1310,1200 1366,1085 1410,970 1450,850|0,815 50,650 103,495 150,370 200,255 250,155 299,92 340,55 370,52 410,75 450,140 495,230 540,355 580,490 620,625 660,765 691,860 740,985 790,1080 850,1160 900,1203 960,1225 1010,1215 1050,1180 1083,1125 1103,1090',
  bandMid: '197,1285 290,1255 410,1218 520,1185 620,1152 700,1115 770,1090 851,1072 950,1050 1072,1020 1180,1000 1292,972 1400,943|5,925 80,900 150,858 263,800 340,762 420,730 484,718 600,718 650,730 704,741 820,747 925,754 1050,755 1145,760 1200,752 1290,735 1366,710 1460,688|5,683 70,672 120,657 170,635 250,600 299,582 380,570 450,555 520,541 580,520 640,492 691,470 780,438 860,408 940,375 1010,350 1060,328 1103,316',
  bandLow: '|1035,1340 1060,1330 1145,1282 1210,1255 1290,1222 1366,1210|5,1190 60,1184 170,1183 299,1169 400,1157 500,1151 600,1148 660,1147 691,1140 800,1120 860,1105 950,1073 1010,1057 1103,1037'
};

const sellDots = [
  '201,963 300,941 375,941 430,953 500,985 560,1020 605,1047||',
  '838,1085 880,1078 950,1058 1010,1042 1080,1031 1130,1031 1200,1042 1280,1058||',
  '|484,630 520,585 560,550 600,527 650,519 700,528 750,560 800,610 850,672 900,748 950,820 1000,885 1060,945 1110,987 1133,993|',
  '||299,474 330,455 380,433 420,420 497,402',
  '||1083,180 1105,171'
];
const buyDots = [
  '618,1136 660,1153 700,1166 740,1173 800,1172 828,1169||',
  '1292,1133 1340,1140 1400,1141 1460,1135|5,1134 43,1125 100,1105 150,1082 200,1043 263,987 330,912 400,825 440,770 472,730|',
  '|1133,1089 1170,1104 1220,1110 1270,1098 1320,1068 1370,1030 1410,980 1450,933|5,900 40,845 103,755 150,695 200,635 250,590 290,563',
  '||505,489 550,486 620,486 670,483 720,468 780,445 830,418 887,380 950,332 1010,293 1074,258'
];

const leo = {
  macd: '197,490 230,470 260,450 290,430 330,408 370,394 410,378 440,370 490,353 540,337 590,312 631,278 680,244 720,220 765,195 820,186 880,189 940,196 985,216 1040,237 1072,254 1130,278 1180,312 1230,340 1292,366 1310,372 1380,372|0,372 43,372 70,366 100,358 150,348 200,354 263,352 290,348 340,360 385,373 395,382 440,400 484,432 530,462 590,512 640,550 704,588 750,608 790,618 830,620 855,628 880,612 925,585 960,545 1000,503 1040,463 1080,410 1100,388 1110,370 1145,325 1180,270 1240,175 1300,120 1340,95 1366,82 1440,83|0,95 50,117 103,143 150,180 200,235 250,290 299,370 310,388 350,455 400,540 450,580 500,605 530,611 570,605 620,575 691,551 760,538 800,510 850,460 887,418 930,385 960,362 1000,335 1050,302 1090,295 1105,298',
  line: '197,513 203,511 215,472 226,457 238,510 251,463 262,455 275,463 300,492 312,500 325,471 337,514 349,537 361,508 373,528 386,505 398,508 410,490 423,523 435,517 447,481 459,495 471,481 484,488 508,436 520,449 533,445 545,436 557,408 569,415 582,403 594,421 606,415 618,394 631,322 643,346 655,338 668,322 680,343 692,360 704,388 716,378 728,387 740,375 753,336 765,409 790,441 814,416 826,421 839,466 851,485 863,464 876,463 888,444 900,432 912,430 924,405 937,398 949,413 961,407 974,413 986,468 998,436 1010,432 1022,408 1035,415 1047,411 1060,418 1072,411 1084,388 1096,391 1108,402 1121,385 1133,405 1158,408 1170,438 1182,445 1194,444 1207,423 1219,442 1231,418 1243,435 1256,436 1268,416 1280,411 1292,372 1305,355 1317,378 1329,388 1341,379 1354,358 1366,360 1378,388 1390,372 1403,341 1415,352 1427,360 1440,361 1452,352 1464,323|0,320 7,319 19,286 31,302 43,355 55,334 67,235 80,185 92,162 104,170 116,148 128,103 141,157 153,143 166,157 178,142 190,198 202,172 214,136 226,103 239,103 251,139 264,149 276,130 288,160 300,212 325,250 337,284 349,238 361,258 374,264 386,265 398,313 411,313 423,305 435,325 447,331 459,388 472,373 484,452 496,480 508,496 521,481 533,499 557,515 594,549 606,526 618,549 631,550 643,541 655,555 667,538 680,550 692,581 704,545 716,574 728,556 741,515 753,524 765,542 778,533 802,526 814,545 839,585 851,580 863,598 876,563 888,589 900,574 925,527 937,514 961,497 986,515 1010,498 1022,493 1035,472 1047,487 1072,451 1084,457 1096,454 1133,424 1145,244 1158,289 1182,256 1194,289 1206,281 1231,233 1256,265 1268,252 1280,225 1292,135 1304,100 1317,225 1341,208 1354,216 1366,244 1378,237 1390,277 1403,256 1415,283 1427,261 1440,262 1452,229 1464,319|0,333 5,342 28,337 38,352 49,347 60,325 71,300 82,279 92,299 103,268 114,250 125,160 136,265 147,280 158,298 179,308 190,318 201,300 212,256 223,264 234,284 245,253 256,268 267,322 277,347 288,337 299,430 320,445 332,437 345,448 375,447 386,430 407,420 420,432 430,420 455,440 465,430 484,385 495,390 540,352 565,357 582,345 593,307 604,298 615,295 626,265 637,318 648,300 659,295 670,320 680,330 691,368 702,349 713,355 735,343 746,360 757,347 775,355 790,350 800,335 812,365 823,388 834,385 844,391 855,358 866,322 877,310 888,340 898,326 908,355 919,363 930,350 941,341 985,343 996,317 1007,343 1018,330 1030,322 1040,327 1051,347 1072,338 1083,433 1103,433',
  red: '197,504 250,507 300,510 350,518 410,530 470,540 540,545 570,541 610,524 660,493 710,453 765,411 810,392 851,378 900,362 935,349 970,346 1120,346 1170,355 1220,368 1270,376 1292,374 1350,366 1410,357 1450,345|0,333 60,323 90,302 150,270 220,262 263,241 290,230 350,227 400,232 460,245 484,260 540,313 600,380 660,442 704,485 765,555 814,598 850,635 880,650 910,653 950,643 1010,615 1060,575 1100,540 1130,515 1170,450 1210,385 1260,320 1300,275 1340,233 1380,202 1450,167|0,163 50,158 103,147 130,139 150,142 200,167 250,193 290,232 345,315 395,390 430,420 465,448 495,458 530,469 565,469 600,457 630,446 680,437 720,440 770,445 810,437 850,420 890,400 940,372 985,350 1050,346 1090,347 1103,353',
  yellow: '197,381 240,412 290,448 350,490 410,527 480,562 570,592 620,601 670,604 720,600 770,591 851,565 940,527 1010,495 1072,469 1160,430 1230,408 1292,388 1350,370 1410,352|0,338 60,323 120,305 200,282 263,263 340,240 400,224 450,216 490,214 540,215 580,223 640,243 704,279 770,323 863,397 925,444 1000,495 1060,527 1110,543 1180,553 1240,548 1320,525 1400,488|0,445 50,407 103,372 160,330 220,292 299,255 370,234 430,229 500,233 560,240 630,250 691,265 760,283 800,302 855,332 930,370 1000,397 1050,417 1103,434'
};

const cci = {
  line: '197,1070 210,1100 238,1140 262,1185 300,1230 325,1272 360,1300 380,1301 395,1292 422,1288 447,1295 490,1298 520,1280 557,1243 594,1190 615,1175 631,1150 655,1095 692,1045 716,1035 765,1002 802,1012 839,1045 870,1097 908,1140 945,1155 985,1154 1012,1166 1030,1157 1060,1130 1084,1117 1108,1097 1150,1093 1195,1097 1230,1110 1250,1112 1292,1128 1305,1102 1350,1082 1378,1050 1403,1035 1427,1000 1460,965|0,945 43,905 67,905 80,875 104,812 140,762 175,725 190,717 226,727 250,716 263,722 275,740 310,785 350,842 398,880 410,893 460,943 484,973 520,1030 570,1108 610,1170 667,1250 704,1275 741,1292 800,1285 860,1288 875,1294 925,1282 975,1257 1010,1248 1047,1225 1096,1190 1145,1167 1158,1120 1200,1035 1250,940 1280,890 1330,805 1360,808 1400,827 1430,855|0,880 25,915 55,955 80,975 103,979 145,962 200,950 235,933 267,924 299,942 330,990 390,1075 430,1115 460,1147 473,1157 485,1150 510,1125 540,1085 590,1025 620,955 645,912 670,886 691,877 720,881 760,889 780,900 800,930 820,942 850,977 865,978 887,966 910,965 935,972 985,976 1025,959 1083,968 1095,990 1105,998',
  velo: '197,1095 215,1075 240,1008 265,975 290,937 325,935 338,902 355,897 373,874 386,886 410,872 435,922 447,918 460,945 490,975 510,985 520,977 533,1010 560,985 600,978 618,990 631,960 643,956 655,972 668,958 692,968 716,1045 735,1050 753,1105 765,1120 790,1180 805,1193 815,1188 839,1222 851,1213 863,1222 890,1185 900,1150 912,1080 924,1050 949,970 961,965 974,900 1010,830 1035,800 1060,769 1072,792 1096,815 1120,890 1145,970 1158,990 1182,1080 1195,1085 1230,1145 1243,1140 1256,1153 1280,1120 1295,1105 1315,1045 1330,1035 1350,990 1378,930 1390,932 1403,907 1415,912 1427,896 1440,922 1460,935|0,953 30,988 43,1035 67,1062 80,1045 92,1055 104,1052 120,1022 150,1002 165,975 190,957 210,980 235,1000 255,972 265,980 275,1045 290,1050 312,1140 345,1205 362,1208 374,1197 388,1210 400,1170 412,1165 435,1108 460,1095 480,1050 500,1042 520,1005 545,965 560,972 575,975 583,963 597,978 619,935 631,948 655,930 680,905 690,872 704,860 716,825 730,835 741,833 753,812 778,832 802,830 815,880 827,888 852,970 875,1020 900,1048 912,1095 925,1085 950,1117 975,1095 985,1097 1000,1108 1010,1080 1035,1045 1047,1000 1060,998 1072,968 1084,976 1108,962 1120,970 1145,982 1158,947 1170,960 1194,885 1206,920 1220,918 1243,960 1256,955 1280,1015 1330,1060 1340,1062 1354,1150 1366,1152 1378,1240 1390,1310 1403,1255 1415,1285 1440,1240 1452,1242|0,1170 15,1155 28,1118 50,1048 60,1045 70,980 82,960 92,890 114,830 125,805 136,757 147,763 158,753 170,772 190,770 212,820 224,832 250,900 277,1030 299,1130 310,1240 330,1282 345,1297 367,1293 386,1240 400,1225 420,1110 440,1000 465,912 475,905 484,800 500,745 517,715 530,715 550,725 565,765 580,800 593,865 610,895 626,960 637,970 650,1010 670,1100 691,1170 702,1200 725,1237 748,1222 757,1230 768,1207 790,1220 800,1185 812,1190 823,1140 844,1100 855,1075 870,990 887,930 900,885 910,875 920,877 930,853 941,862 965,845 975,870 1000,888 1007,886 1020,908 1030,908 1060,1010 1083,1055 1103,1092',
  fast: '205,1158 240,1105 290,1010 338,945 386,903 430,887 460,892 490,920 530,965 570,990 620,986 668,970 710,967 740,1000 765,1025 790,1090 820,1150 850,1190 885,1208 920,1195 945,1130 980,1030 1010,950 1035,880 1060,830 1084,805 1105,799 1135,820 1165,890 1190,970 1220,1050 1250,1100 1280,1130 1305,1130 1340,1098 1378,1020 1415,950 1440,922 1465,919|0,922 30,930 60,970 90,1015 120,1043 160,1038 200,1005 235,983 275,980 300,1005 330,1055 360,1130 395,1190 430,1188 470,1140 520,1060 570,1000 620,968 667,950 710,910 750,862 780,833 805,827 835,848 875,920 910,1010 950,1080 985,1095 1030,1100 1060,1070 1100,1010 1133,977 1180,967 1220,935 1250,930 1290,958 1330,1012 1370,1060 1400,1150 1430,1220 1465,1260|5,1250 40,1180 80,1085 110,980 145,865 175,790 205,770 240,788 275,860 310,1000 340,1150 370,1250 395,1275 420,1255 450,1170 480,1030 510,880 540,785 570,733 600,765 640,865 680,1000 720,1110 750,1185 790,1223 830,1195 870,1130 910,1005 945,900 970,867 990,862 1030,880 1060,910 1083,960 1103,1005',
  slow: '197,1172 220,1155 260,1090 310,1010 361,945 410,902 450,889 480,896 520,935 560,975 600,989 650,980 704,969 735,975 770,1010 810,1090 851,1165 890,1200 910,1204 935,1180 970,1100 1010,990 1045,890 1072,840 1100,808 1120,801 1145,815 1180,885 1220,1000 1255,1080 1292,1125 1317,1130 1350,1097 1390,1020 1427,950 1460,925|0,924 43,935 80,985 110,1025 145,1040 190,1015 230,985 275,981 310,1000 350,1060 390,1145 432,1189 470,1160 530,1070 583,1008 630,975 690,945 741,890 780,840 815,829 852,845 890,910 937,1010 980,1075 1030,1101 1070,1075 1120,1005 1170,972 1210,955 1250,931 1275,932 1310,965 1366,1035 1410,1140 1450,1230|0,1250 15,1252 50,1190 92,1070 130,930 170,820 205,778 230,776 265,815 299,895 330,1020 360,1170 390,1250 412,1270 440,1230 475,1110 510,950 550,790 587,741 610,765 640,835 691,990 740,1130 780,1205 812,1220 850,1190 887,1120 930,970 970,885 1005,865 1035,870 1065,900 1103,975',
  stoc: [
    '594,1311 612,1306 631,1288 680,1220 740,1125 800,1018 860,950 910,898 940,820 965,752 985,742 1010,765 1040,779 1100,779 1140,797 1180,870 1220,950 1260,1005 1292,1015 1330,1002 1378,970 1415,945 1440,885 1465,795|0,790 20,735 43,716 400,716 440,725 484,767 515,840 550,950 600,1085 640,1210 670,1290 695,1310|',
    '|938,1310 975,1295 1035,1260 1096,1198 1145,1147 1190,1060 1240,945 1290,830 1330,728 1350,716 1460,716|0,715 90,724 140,721 180,730 220,750 265,764 300,797 345,890 390,1010 430,1140 465,1280 485,1309 510,1310 545,1305 590,1242 640,1165 670,1138 700,1132 740,1150 780,1162 810,1160 840,1138 870,1090 900,1020 940,975 975,880 1005,775 1022,760 1040,768 1075,830 1090,880 1103,925'
  ]
};

// ---------- drawing helpers ----------
const barX = i => 82.5 + 5 * i;
const lastX = 1707;

function decode(text, top) {
  const out = [];
  text.split('|').forEach((part, n) => {
    if (!part) return;
    part.split(' ').forEach(p => {
      const [x, y] = p.split(',').map(Number);
      out.push([chunks[n].x + x / chunks[n].k, top + y / 3]);
    });
  });
  return out;
}

function line(p, color, extra = '') {
  const pts = p.map(a => a[0].toFixed(1) + ',' + a[1].toFixed(1)).join(' ');
  return `<polyline points="${pts}" fill="none" stroke="${color}" ${extra}/>`;
}

// Catmull-Rom spline through the samples
function curve(p, color, extra = '') {
  let d = `M${p[0][0]} ${p[0][1]}`;
  for (let i = 0; i < p.length - 1; i++) {
    const a = p[i - 1] || p[i], b = p[i], c = p[i + 1], e = p[i + 2] || c;
    const pt = (x, y) => x.toFixed(1) + ' ' + y.toFixed(1);
    d += `C${pt(b[0] + (c[0] - a[0]) / 6, b[1] + (c[1] - a[1]) / 6)} ${pt(c[0] - (e[0] - b[0]) / 6, c[1] - (e[1] - b[1]) / 6)} ${pt(c[0], c[1])}`;
  }
  return `<path d="${d}" fill="none" stroke="${color}" ${extra}/>`;
}

function valueAt(p, x) {
  let i = 1;
  while (i < p.length - 1 && p[i][0] < x) i++;
  const a = p[i - 1], b = p[i];
  return a[1] + (b[1] - a[1]) * (x - a[0]) / (b[0] - a[0]);
}

function dots(p, color) {
  let s = '';
  for (let i = 0; i < close.length; i++) {
    const x = barX(i);
    if (x < p[0][0] - 1 || x > p[p.length - 1][0] + 1) continue;
    s += `<rect x="${x - 2}" y="${Math.round(valueAt(p, x)) - 2}" width="4" height="4" fill="${color}"/>`;
  }
  return s;
}

function histogram(p, zero, width, color) {
  let d = '';
  for (let i = 0; i < close.length; i++) {
    d += `M${barX(i)} ${zero}V${valueAt(p, barX(i)).toFixed(1)}`;
  }
  return `<path d="${d}" stroke="${color}" stroke-width="${width}"/>`;
}

function days(y1, y2) {
  let d = '';
  for (let x = 167.5; x < lastX; x += 90) d += `M${x} ${y1}V${y2}`;
  return `<path d="${d}" stroke="#333" stroke-dasharray="12 4 4 4"/>`;
}

const level = (y, color, extra = '') => `<path d="M81 ${y}H${lastX}" stroke="${color}" ${extra}/>`;
const dashed = 'stroke-dasharray="3 3"';

// ---------- price pane ----------
function drawPrice() {
  const at = t => decode(t, 110);
  let s = days(109, 555) + level(355.5, '#008080');
  s += curve(at(price.velo), '#008080') + curve(at(price.slow), '#00f') + curve(at(price.fast), '#f00', dashed);
  s += curve(at(price.bandMid), '#a6caf0', 'stroke-dasharray="6 2 2 2"') + curve(at(price.bandLow), '#a6caf0', 'stroke-dasharray="6 2 2 2"');

  // 480 px cycle arcs, clipped at the right axis
  s += '<clipPath id="inside"><rect x="81" y="90" width="1759" height="468"/></clipPath><g clip-path="url(#inside)">';
  for (let x = -122.5; x < 1840; x += 480) {
    s += `<path d="M${x + 3} 540A237 110 0 0 1 ${x + 477} 540" fill="none" stroke="#f00" stroke-dasharray="18 6"/>`;
    s += `<path d="M${x - 2} 543v9M${x + 2} 543v9M${x} 552v5" stroke="#f00"/>`;
  }
  s += '</g>';

  sellDots.forEach(t => s += dots(at(t), '#f00'));
  buyDots.forEach(t => s += dots(at(t), '#0f0'));

  const closes = close.map((v, i) => [barX(i), 110 + v / 3]);
  s += line(closes, '#66f');
  closes.forEach(c => s += `<rect x="${c[0] - 2}" y="${Math.round(c[1]) - 2}" width="3" height="4" fill="#0ff"/>`);

  // [x, arrow top, entry bar y]
  [[88, 464, 490], [358, 483, 522], [833, 407, 452], [1393, 254, 284]].forEach(([x, y, e]) => {
    s += `<path d="M${x - 2} ${y}h4v9h3l-5 7-5-7h3z" fill="#f00"/><text x="${x}" y="${y - 10}">-1</text>`;
    s += `<path d="M${x - 6} ${e - 4}v8l4-4z" fill="#f00"/>`;
  });
  [[272, 418, 397], [538, 451, 441], [1078, 324, 287], [1447, 242, 214]].forEach(([x, y, e]) => {
    s += `<path d="M${x - 1} ${y + 13}h3v-7h2l-4-6-4 6h3z" fill="#0f0"/><text x="${x}" y="${y + 30}">1</text>`;
    s += `<path d="M${x - 6} ${e - 4}v8l4-4z" fill="#0f0"/>`;
  });

  s += '<path d="M1343 321.500L1891 318.500" stroke="#ff0" stroke-width="3"/>';
  document.getElementById('plot1').innerHTML = s;
}

// ---------- Leo Chart + MACD pane ----------
function drawLeo() {
  const at = t => decode(t, 550);
  let s = days(577, 769) + histogram(at(leo.macd), 675.5, 2, '#303030');
  s += level(614.5, '#f00') + level(761.5, '#f00') + level(651.5, '#6b6b00') + level(724.5, '#6b6b00') + level(688.5, '#00f', dashed);
  for (let x = 312.500; x < lastX; x += 320) {
    s += `<path d="M${x} 582V769" stroke="#007070" stroke-dasharray="18 6"/>`;
  }
  s += curve(at(leo.red), '#f00') + curve(at(leo.yellow), '#ff0') + line(at(leo.line), '#0ff');
  document.getElementById('plot2').innerHTML = s;
}

// ---------- CCI pane ----------
function drawCci() {
  const at = t => decode(t, 550);
  let s = days(788, 988) + histogram(at(cci.line), 917.5, 1, '#333');
  s += level(847.5, '#808080') + level(886.5, '#008080') + level(987.5, '#808080');
  s += line(at(cci.velo), '#008080') + curve(at(cci.slow), '#00f') + curve(at(cci.fast), '#f00', dashed);
  cci.stoc.forEach(t => s += curve(at(t), '#b85c00', dashed));
  s += line(at(cci.line), '#a0a0a0');
  // overbought part in red
  s += '<clipPath id="over"><rect x="81" y="769" width="1759" height="78"/></clipPath>';
  s += line(at(cci.line), '#f00', 'clip-path="url(#over)"');
  [[257, 980, '#f00'], [997, 982, '#f00'], [1457, 982, '#f00'], [782, 794, '#0ff'], [1282, 794, '#0ff']].forEach(([x, y, c]) => {
    s += `<circle cx="${x}" cy="${y}" r="3" fill="${c}"/>`;
  });
  document.getElementById('plot3').innerHTML = s;
}

// ---------- axes ----------
function axis(id, top, height, marks) {
  document.getElementById(id).innerHTML = marks.map(([y, text, cls]) =>
    `<div class="mark ${cls ? 'tag bg-' + cls : ''}" style="top:${((y - top) / height * 100).toFixed(2)}%">${text}</div>`
  ).join('');
}

const m1 = [[175, '174.50'], [253, '174.00'], [331, '173.50'], [410, '173.00'], [488, '172.50']];
const m2 = [[596, '10.00'], [613, ''], [633, '6.00'], [651, ''], [669, '2.00'], [688, ''], [706, '-2.00'], [724, ''], [743, '-6.00']];
const m3 = [[800, ''], [829, '150.00'], [858, ''], [888, '50.00'], [917, ''], [946, '-50.00'], [975, '']];

axis('axisL1', 90, 468, m1);
axis('axisL2', 558, 211, m2);
axis('axisL3', 769, 220, m3);
axis('axisR1', 90, 468, [...m1, [168, '174.55', 'red'], [217, '174.24', 'sky'], [206, '174.31', 'violet'], [458, '172.70', 'sky']]);
axis('axisR2', 558, 211, [...m2, [615, '8.00', 'red'], [652, '4.00', 'olive'], [689, '0.00', 'blue'], [696, '-0.85', 'cyan'], [725, '-4.00', 'olive'], [762, '-8.00', 'red']]);
axis('axisR3', 769, 220, [...m3.filter(m => m[1] !== '50.00'), [849, '120.00', 'gray'], [884, '59.59', 'silver'], [989, '-120.00', 'gray']]);

const dates = ['11/12', '11/15', '11/16', '11/17', '11/18', '11/19', '11/22', '11/23', '11/24', '11/25', '11/26', '11/29', '11/30', '12/01', '12/02', '12/03', '12/06', '12/07'];
const pct = x => ((x - 2) / 1916 * 100).toFixed(2) + '%';
let time = `<span style="left:${pct(99)}">11:30</span><span style="left:${pct(1779)}">17:30</span>`;
dates.forEach((d, i) => time += `<span style="left:${pct(169 + 90 * i)}">${d}</span>`);
[97, 238, 377, 448, 518, 587, 727, 797, 868, 1007, 1078, 1147, 1217, 1357, 1427, 1498, 1637, 1708, 1777].forEach(x => time += `<i style="left:${pct(x)}"></i>`);
[167, 257, 527, 887, 1157, 1517].forEach(x => time += `<i class="long" style="left:${pct(x)}"></i>`);
document.getElementById('timeAxis').innerHTML = time;

drawPrice();
drawLeo();
drawCci();
```
